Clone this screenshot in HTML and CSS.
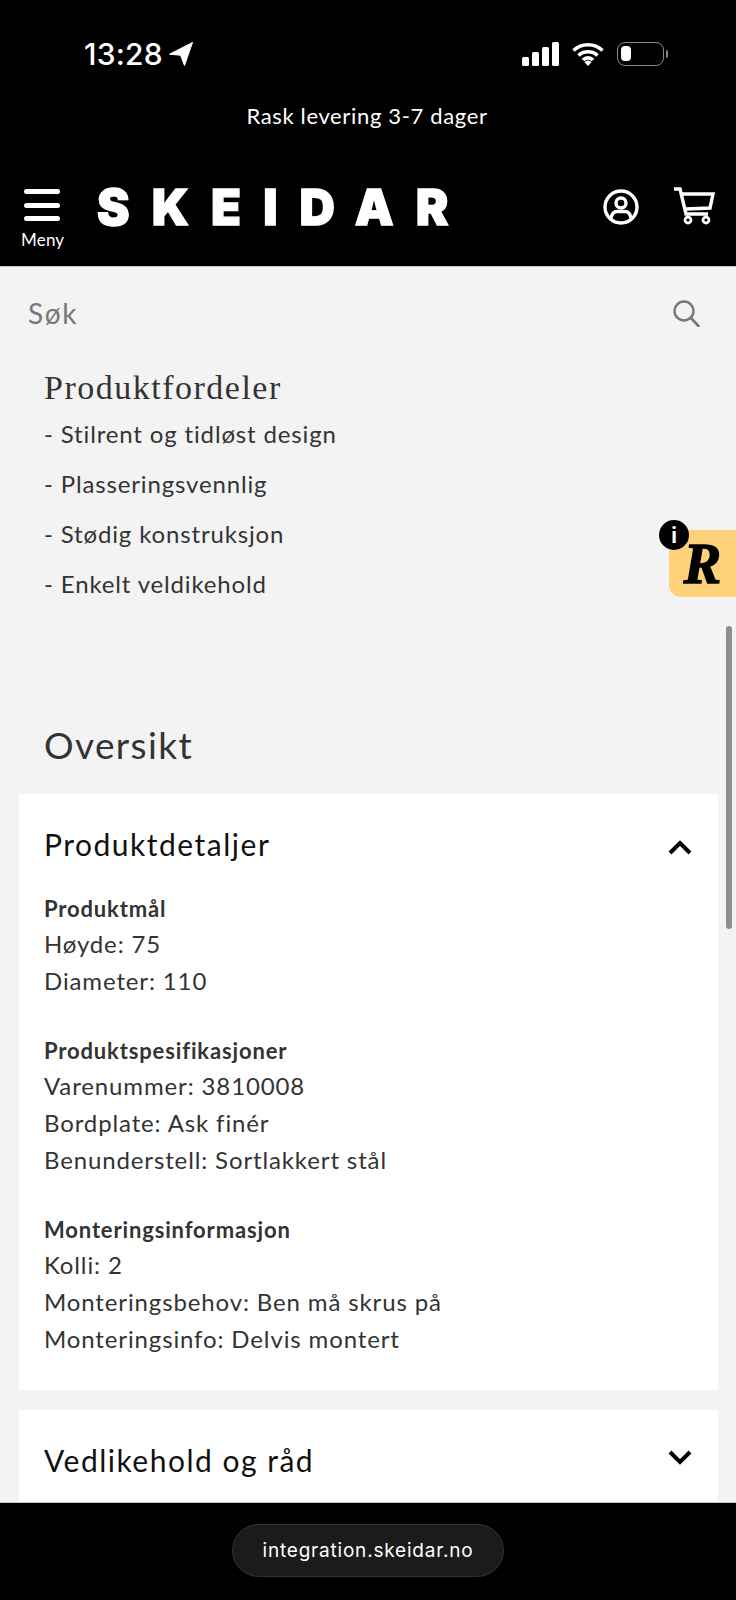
FILE: index.html
```html
<!DOCTYPE html>
<html lang="no">
<head>
<meta charset="utf-8">
<title>Skeidar</title>
<link rel="stylesheet" href="styles.css">
</head>
<body>
<div class="phone">
  <header class="top">
    <div class="status">
      <div class="status-left">
        <span class="time">13:28</span>
        <svg class="loc" viewBox="0 0 24 24"><path d="M23.500.5.5 12.200l11 1 4 10.300z" fill="#fff" stroke="#fff" stroke-linejoin="round"/></svg>
      </div>
      <div class="status-right">
        <svg class="signal" viewBox="0 0 37 24"><rect x="0" y="15" width="7" height="9" rx="1.5"/><rect x="10" y="10" width="7" height="14" rx="1.5"/><rect x="20" y="5" width="7" height="19" rx="1.5"/><rect x="30" y="0" width="7" height="24" rx="1.5"/></svg>
        <svg class="wifi" viewBox="0 0 32 24"><path d="M1.500 8.500a21 21 0 0 1 29 0M6.500 13.500a14 14 0 0 1 19 0M11 18a7 7 0 0 1 10 0" fill="none" stroke="#fff" stroke-width="3.600"/><path d="M16 24l-3.600-4a5 5 0 0 1 7.200 0z" fill="#fff"/></svg>
        <div class="battery"><span class="level"></span></div>
        <span class="nub"></span>
      </div>
    </div>
    <div class="promo">Rask levering 3-7 dager</div>
    <div class="nav">
      <div class="menu">
        <div class="burger"><span></span><span></span><span></span></div>
        <span class="menu-label">Meny</span>
      </div>
      <div class="logo">SKEIDAR</div>
      <div class="nav-icons">
        <svg class="user" viewBox="0 0 36 36"><circle cx="18" cy="18" r="16" fill="none" stroke="#fff" stroke-width="3.400"/><circle cx="18" cy="14" r="5" fill="none" stroke="#fff" stroke-width="3.400"/><path d="M8 29c1-5 3-6.500 6-6.500h8c3 0 5 1.500 6 6.500" fill="none" stroke="#fff" stroke-width="3.400"/></svg>
        <svg class="cart" viewBox="0 0 42 38"><path d="M1 2h6l6 25h22M9 7h31l-3 14-24 1" fill="none" stroke="#fff" stroke-width="3.400"/><circle cx="15" cy="33" r="3" fill="none" stroke="#fff" stroke-width="2.800"/><circle cx="33" cy="33" r="3" fill="none" stroke="#fff" stroke-width="2.800"/></svg>
      </div>
    </div>
  </header>

  <main class="page">
    <div class="search">
      <span class="search-text">Søk</span>
      <svg class="search-icon" viewBox="0 0 28 28"><circle cx="12" cy="12" r="9.500" fill="none" stroke="#777" stroke-width="2.400"/><path d="M19 19l7.500 8" fill="none" stroke="#777" stroke-width="2.600" stroke-linecap="round"/></svg>
    </div>
    <section class="benefits">
      <h2 class="benefits-title">Produktfordeler</h2>
      <p>- Stilrent og tidløst design</p>
      <p>- Plasseringsvennlig</p>
      <p>- Stødig konstruksjon</p>
      <p>- Enkelt veldikehold</p>
    </section>
    <h2 class="overview">Oversikt</h2>
    <section class="card open">
      <div class="card-head">
        <h3>Produktdetaljer</h3>
        <svg class="chev" viewBox="0 0 24 16"><path d="M2 13 12 3l10 10" fill="none" stroke="#000" stroke-width="4"/></svg>
      </div>
      <div class="group">
        <h4>Produktmål</h4>
        <p>Høyde: 75</p>
        <p>Diameter: 110</p>
      </div>
      <div class="group">
        <h4>Produktspesifikasjoner</h4>
        <p>Varenummer: 3810008</p>
        <p>Bordplate: Ask finér</p>
        <p>Benunderstell: Sortlakkert stål</p>
      </div>
      <div class="group">
        <h4>Monteringsinformasjon</h4>
        <p>Kolli: 2</p>
        <p>Monteringsbehov: Ben må skrus på</p>
        <p>Monteringsinfo: Delvis montert</p>
      </div>
    </section>
    <section class="card">
      <div class="card-head">
        <h3>Vedlikehold og råd</h3>
        <svg class="chev" viewBox="0 0 24 16"><path d="M2 3l10 10L22 3" fill="none" stroke="#000" stroke-width="4"/></svg>
      </div>
    </section>
  </main>

  <footer class="bottom">
    <div class="url">integration.skeidar.no</div>
  </footer>

  <div class="widget"><span class="widget-r">R</span></div>
  <div class="widget-info">i</div>
  <div class="scrollbar"></div>
</div>
</body>
</html>
```

FILE: styles.css
```css
* { box-sizing: border-box; }
html, body { margin: 0; padding: 0; }
body { font-family: Lato, "Liberation Sans", sans-serif; background: #000; }
h2, h3, h4, p { margin: 0; font-weight: 400; }

.phone { position: relative; width: 736px; height: 1600px; overflow: hidden; display: flex; flex-direction: column; background: #f3f3f3; }

.top { height: 267px; flex: none; background: #000; color: #fff; border-bottom: 1px solid #c8c8c8; }
.status { height: 106px; padding: 34px 68px 0 84px; display: flex; justify-content: space-between; align-items: flex-start; }
.status-left { display: flex; align-items: center; gap: 6px; height: 40px; }
.time { font-family: Inter, sans-serif; font-size: 30px; font-weight: 500; letter-spacing: .2px; color: #fff; }
.loc { width: 24px; height: 24px; }
.status-right { display: flex; align-items: center; height: 40px; }
.signal { width: 37px; height: 24px; fill: #fff; margin-right: 13px; }
.wifi { width: 32px; height: 24px; margin-right: 13px; }
.battery { width: 47px; height: 24px; border: 1.5px solid #8a8a8a; border-radius: 8px; padding: 3px; }
.level { display: block; width: 10px; height: 15px; background: #fff; border-radius: 4px; }
.nub { width: 2px; height: 8px; background: #8a8a8a; margin-left: 2px; border-radius: 0 2px 2px 0; }

.promo { text-align: center; font-size: 22px; letter-spacing: .65px; line-height: 20px; color: #fff; padding-right: 2px; }

.nav { display: flex; align-items: flex-start; margin-top: 63px; padding: 0 21px; position: relative; }
.menu { width: 76px; flex: none; display: flex; flex-direction: column; }
.burger { width: 36px; margin-left: 3px; height: 32px; display: flex; flex-direction: column; justify-content: space-between; }
.burger span { display: block; height: 5px; background: #fff; border-radius: 2.500px; }
.menu-label { font-size: 17px; line-height: 20px; margin-top: 9px; letter-spacing: .2px; }
.logo { font-family: Inter, sans-serif; font-weight: 900; font-size: 49px; line-height: 38px; letter-spacing: 22.100px; color: #fff; -webkit-text-stroke: 1.300px #fff; }
.nav-icons { margin-left: auto; display: flex; gap: 34px; }
.user { width: 36px; height: 36px; }
.cart { width: 42px; height: 38px; margin-top: -2px; }

.page { flex: 1; min-height: 0; overflow: hidden; }
.search { height: 92px; padding: 0 36px 0 28px; display: flex; justify-content: space-between; align-items: center; }
.search-text { font-size: 28px; letter-spacing: 1.700px; color: #777; }
.search-icon { width: 28px; height: 28px; }

.benefits { padding: 8px 44px 0; }
.benefits-title { font-family: "Liberation Serif", serif; font-size: 34px; line-height: 42px; color: #333; letter-spacing: 1.500px; }
.benefits p { font-size: 24px; line-height: 50px; letter-spacing: .85px; color: #333; }

.overview { font-size: 37px; line-height: 48px; letter-spacing: 1.400px; color: #333; padding: 0 44px; margin-top: 112px; }

.card { background: #fff; margin: 0 18.500px 20px; padding: 0 25.500px 33px; }
.overview + .card { margin-top: 25px; }
.card-head { display: flex; justify-content: space-between; align-items: center; padding-top: 1px; height: 99px; }
.card-head h3 { font-size: 30px; letter-spacing: 1.500px; color: #111; }
.chev { width: 24px; height: 16px; margin-top: -6px; }
.open .chev { margin-top: 8px; }
.group { margin-bottom: 36px; }
.group:last-child { margin-bottom: 0; }
.group h4 { font-size: 22px; font-weight: 700; line-height: 32px; letter-spacing: .85px; color: #333; }
.group p { font-size: 24px; line-height: 37px; letter-spacing: .87px; color: #333; }

.bottom { flex: none; height: 98px; background: #000; border-top: 1px solid #c8c8c8; display: flex; justify-content: center; padding-top: 21px; align-items: flex-start; }
.url { width: 272px; height: 53px; border-radius: 27px; background: #1b1b1b; border: 1px solid #333; color: #fff; font-family: Inter, sans-serif; font-size: 19px; letter-spacing: .8px; display: flex; align-items: center; justify-content: center; }

.widget { position: absolute; left: 669px; top: 530px; width: 67px; height: 67px; background: #ffd27a; border-radius: 12px 0 0 12px; display: flex; align-items: center; justify-content: center; }
.widget-r { font-family: "Liberation Serif", serif; font-style: italic; font-weight: 700; font-size: 56px; line-height: 1; color: #000; -webkit-text-stroke: 1.500px #000; }
.widget-info { position: absolute; left: 659px; top: 520px; width: 30px; height: 30px; border-radius: 50%; background: #000; color: #fff; font-family: Inter, sans-serif; font-weight: 700; font-size: 21px; display: flex; align-items: center; justify-content: center; }
.scrollbar { position: absolute; left: 726px; top: 626px; width: 6px; height: 303px; background: #8e8e8e; border-radius: 3px; }
```
